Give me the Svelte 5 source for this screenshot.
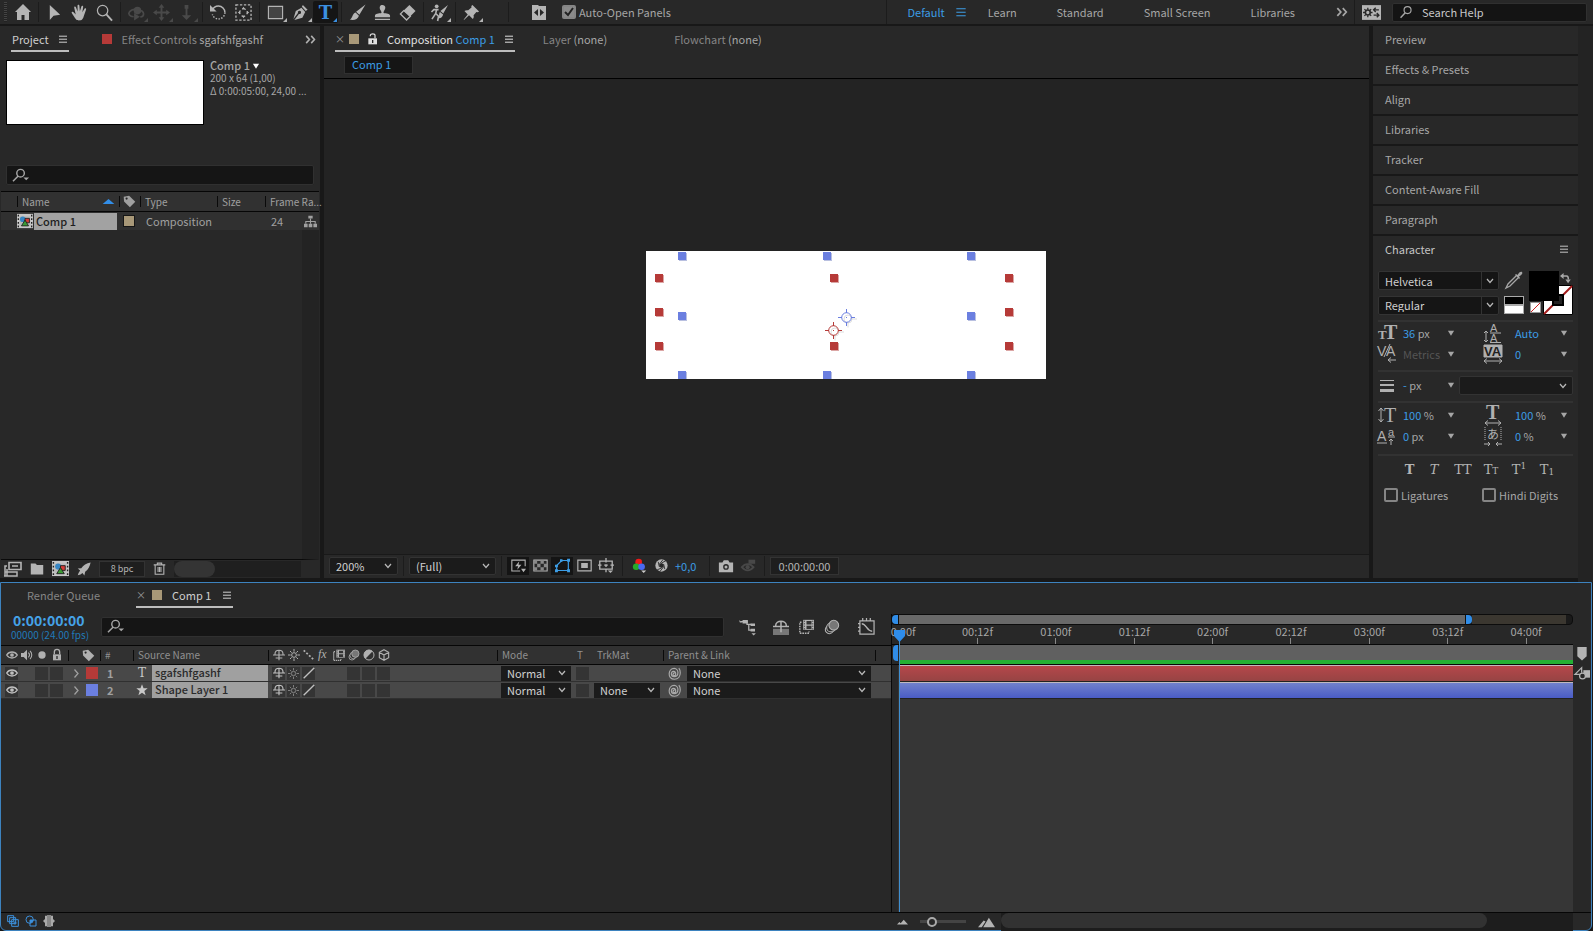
<script lang="ts">
	const icons: Record<string, string> = {
		home: '<path fill="currentColor" d="M9 1 1 9h2v8h4.500v-5h3v5H15V9h2z"/>',
		select: '<path fill="currentColor" d="M4 1v16l4-4.500 7-1z"/>',
		hand: '<path fill="currentColor" d="M5.500 16.500C4 14.500 1.500 11 .8 9.600c-.5-1.300 1-1.900 1.900-.8L5 11 3.400 4c-.3-1.500 1.400-1.800 1.800-.5L7 8 6.900 2c0-1.500 1.900-1.500 2 0l.5 5.800L11 2.600c.4-1.300 2.100-.9 1.900.5L12 8.700l2.300-3.600c.8-1.100 2.200-.2 1.600 1L13.500 13c-.6 2-1.500 4-3 4.200-2 .3-4 .3-5-.7z"/>',
		zoom: '<circle cx="7" cy="7" r="5.500" fill="none" stroke="currentColor" stroke-width="1.300"/><path d="m11 11 6 6.500" stroke="currentColor" stroke-width="2"/>',
		orbit: '<path fill="none" stroke="currentColor" stroke-width="1.800" d="M6 13.500C1.500 13 0 10.500 1.500 8.500S7 5.500 10 6s6.500 2 6.500 4.500c0 1.500-1.500 3-3.500 3.300"/><path fill="currentColor" d="m6.500 9.500 6 4-6 4z"/><circle cx="10" cy="7" r="4" fill="currentColor"/>',
		pan: '<path fill="currentColor" d="m9 0 3 4h-2v4h4V6l4 3-4 3v-2h-4v4h2l-3 4-3-4h2v-4H4v2L0 9l4-3v2h4V4H6z"/>',
		dolly: '<path fill="currentColor" d="M8 3h2v9h4l-5 5-5-5h4zM7 1h4v4H7z"/>',
		rotate: '<path fill="none" stroke="currentColor" stroke-width="1.600" d="M2.500 6.500A6.900 6.900 0 0 1 9 2.200a6.800 6.800 0 0 1 6.800 6.800"/><path fill="none" stroke="currentColor" stroke-width="1.500" stroke-dasharray="1.500 1.500" d="M15.800 9A6.800 6.800 0 0 1 2.500 11"/><path fill="currentColor" d="M0 1v7h7z"/>',
		anchor: '<path fill="none" stroke="currentColor" stroke-width="1.400" stroke-dasharray="2.500 1.700" d="M1 1h16v16H1z"/><circle cx="9" cy="9" r="4" fill="none" stroke="currentColor" stroke-width="1.200" stroke-dasharray="4 2.280" stroke-dashoffset="2"/><path fill="currentColor" d="m9 3 1.800 2.500H7.200zM9 15l1.800-2.500H7.200zM3 9l2.500-1.800v3.600zM15 9l-2.500-1.800v3.600z"/>',
		rect: '<path fill="#444" stroke="currentColor" stroke-width="1.200" d="M1.500 2.500h15v13h-15z"/>',
		pen: '<path fill="currentColor" d="m11.500 1 5 5-2 1.500-4-4.500zM10 4l4 4.500-3 6L2.500 17l4.800-6.500a1.700 1.700 0 1 0-1-1L1.500 16 4 7.500z"/>',
		type: '<text x="9" y="16" text-anchor="middle" font-family="DejaVu Serif" font-weight="bold" font-size="19" fill="currentColor">T</text>',
		brush: '<path fill="currentColor" d="M17.500.5 11 11.500 7.500 8.300zM7 9l3.500 3.400C9.500 16 5 18 .8 16.500 4 15 3.500 10 7 9z"/>',
		stamp: '<path fill="currentColor" d="M8 9.500C8 7 6 6.500 6 4s1.500-3 3-3 3 .8 3 3-2 3-2 5.500c3 .5 7 .5 7 3v1.500H1v-1.500c0-2.500 4-2.500 7-3zM1 15.500h16V17H1z"/>',
		eraser: '<path fill="currentColor" d="m11 1 6.500 6.500-6 6L5 7z"/><path fill="none" stroke="currentColor" stroke-width="1.400" d="m5 7-3.500 3.500L8 17l4-4z"/>',
		roto: '<circle cx="6" cy="2.500" r="2" fill="currentColor"/><path fill="none" stroke="currentColor" stroke-width="1.700" d="M.5 8.500 3 6h5M6 5.500 5 10l-4 6M5 10l3 3-1 5"/><path fill="currentColor" d="m18 1-5 9-3-2.500zM9.500 8.500l3.300 2.700c-.5 3-3 4.500-5 3.800 1.500-1 0-4.500 1.700-6.500z"/>',
		pin: '<path fill="currentColor" d="m10 1 7 7-1.500.8-1.300-.3-3 3.500c.5 1.800 0 3-.8 4l-4-4L1 17l-.2-.5L5 11 1.500 7.500c1-.8 2.500-1.300 4-.8l3.500-3-.2-1.500z"/>',
		snapbox: '<path fill="currentColor" d="M2 2h6l1 1h7v14H2z"/><path fill="#282828" d="M9 2h7v1H9zM8 6v7l-4-3.500zM10 6v7l4-3.500z"/>',
		syncbox: '<path fill="currentColor" d="M0 2h18v14H0z"/><circle cx="5.500" cy="9" r="2.300" fill="none" stroke="#282828" stroke-width="1.500"/><path stroke="#282828" stroke-width="1.200" d="M5.500 4.500v2M5.500 11.500v2M1 9h2M8 9h2M2.300 5.800l1.400 1.400M7.300 10.800l1.400 1.400M8.700 5.800 7.300 7.200M3.700 10.800l-1.400 1.400"/><path fill="none" stroke="#282828" stroke-width="1.300" d="M11 6.500h5M11 11.500h5M13 4.500l-2 2 2 2M14 9.500l2 2-2 2"/>',
		search: '<circle cx="11" cy="6.500" r="4.500" fill="none" stroke="currentColor" stroke-width="1.500"/><path d="m8 10-6 6.500" stroke="currentColor" stroke-width="1.800"/>',
		searchmenu: '<circle cx="8" cy="6.500" r="4" fill="none" stroke="currentColor" stroke-width="1.500"/><path d="M5.500 9.500 0 15" stroke="currentColor" stroke-width="1.600"/><path fill="currentColor" d="M11 11h6l-3 3z"/>',
		menu: '<path stroke="currentColor" stroke-width="1.500" d="M3 4.800h12M3 9.300h12M3 13.800h12"/>',
		more: '<path fill="none" stroke="currentColor" stroke-width="2.200" d="m3 4 4.500 5L3 14M10 4l4.500 5-4.500 5"/>',
		lock: '<path fill="currentColor" d="M3 8h12v9H3z"/><path fill="none" stroke="currentColor" stroke-width="2" d="M5 8V4.500a4 4 0 0 1 8 0V8"/><path fill="#282828" d="M8 10.500h2V15H8z"/>',
		unlock: '<path fill="currentColor" d="M2 8h13v9H2z"/><path fill="none" stroke="currentColor" stroke-width="1.800" d="M5 5V3.500c0-3 7-3 7 0V8"/><path fill="#282828" d="M7.500 10.500h2V15h-2z"/>',
		up: '<path fill="currentColor" d="M2 12 9 6l7 6z"/>',
		down: '<path fill="currentColor" d="M2 4h14l-7 11z"/>',
		tag: '<path fill="currentColor" d="M1 2.500 8.500 1 17 9.500 9.500 17 1.500 9z"/><circle cx="5" cy="5" r="1.500" fill="#282828"/>',
		comp: '<path fill="#c6c6c6" d="M0 1h18v16H0z"/><path stroke="#222" stroke-width="1.500" stroke-dasharray="2 2" d="M1.500 2v14M16.500 2v14"/><path fill="#bbb" d="M3 3.500h12v11H3z"/><circle cx="6.500" cy="7" r="3.200" fill="#3786c4"/><path fill="#d53b36" stroke="#222" d="M9 6h5v5H9z"/><path fill="#3b9a36" stroke="#222" d="m9 8 4 6.500H5z"/>',
		tree: '<path fill="currentColor" d="M6 1h6v4H6zM0 12h5v5H0zM6.500 12h5v5h-5zM13 12h5v5h-5z"/><path fill="none" stroke="currentColor" stroke-width="1.500" d="M9 5v7M2.500 12V9h13v3"/>',
		footage: '<path fill="none" stroke="currentColor" stroke-width="1.600" d="M5 2.500h12v7H5z"/><path fill="none" stroke="currentColor" stroke-width="1.500" d="M3 6H1v10M1 12h12v4H0M3 9v7M8 6h6"/>',
		folder: '<path fill="currentColor" d="M1 2h6l2 2h8v12H1z"/>',
		rocket: '<path fill="currentColor" d="M17.500.5C12 1 8 4 5.500 8L1 8.500l3 2.500-2 3-1 3 3.500-1 2.500-2 2.500 3.500 1-5c4-3 6-7 7-12z"/>',
		trash: '<path fill="none" stroke="currentColor" stroke-width="1.500" d="M1 4h16M6 4V1.500h6V4M3 4v13h12V4M7 7v7M9 7v7M11 7v7"/>',
		preview: '<path fill="none" stroke="currentColor" stroke-width="1.300" d="M17 10V2.500H1v13h10"/><path fill="currentColor" d="m10 4-5 6h3.500l-1 4 5-6H9zM12 13h6l-3 4z"/>',
		checker: '<path fill="none" stroke="currentColor" stroke-width="1.300" d="M1 2.500h16v13H1z"/><path fill="#888" d="M1 3h4v4H1zM9 3h4v4H9zM5 7h4v4H5zM13 7h4v4h-4zM1 11h4v4H1zM9 11h4v4H9z"/>',
		mask: '<path fill="none" stroke="currentColor" stroke-width="1.400" d="M2 15V9l6-6h8v12z"/><path fill="currentColor" d="M0 13.500h3.500V17H0zM14.500 13.500H18V17h-3.500zM14.500 1H18v3.500h-3.500zM6 1.500h3v3H6zM0 8h3.500v3H0z"/>',
		region: '<path fill="none" stroke="currentColor" stroke-width="1.400" d="M1 2.500h16v13H1z"/><path fill="currentColor" d="M5 6h8v6H5z"/>',
		guides: '<path fill="none" stroke="currentColor" stroke-width="1.500" d="M2 3.500h14v9H2zM9 0v5M9 7v3M9 12v4M0 8h4M7 8h4M14 8h4"/><path fill="currentColor" d="M11 14h6l-3 3z"/>',
		rgb: '<circle cx="8" cy="5" r="4" fill="#f21818"/><circle cx="5" cy="10.500" r="4" fill="#28a928"/><circle cx="11.500" cy="10.500" r="4" fill="#4969f2"/><path fill="#ccc" d="M11 15h6l-3 3z"/>',
		shutter: '<circle cx="9" cy="9" r="8.500" fill="currentColor"/><path fill="#282828" d="m9 5.500 3 1.700v3.600l-3 1.700-3-1.700V7.200z"/><path fill="none" stroke="#282828" stroke-width="1.200" d="m9 5.500 6-3M12 7.200 13.500 14M12 10.800 7 17M9 12.500l-6 2.500M6 10.800 4.500 4M6 7.200 11 1"/>',
		camera: '<path fill="currentColor" d="M1 5h4l1.500-2.500h5L13 5h4v11H1z"/><circle cx="9" cy="10" r="3.200" fill="#282828"/><circle cx="9" cy="10" r="1.700" fill="currentColor"/>',
		showcam: '<path fill="none" stroke="currentColor" stroke-width="2.200" d="M1 11c4-5 10-5 14 0-4 5-10 5-14 0z"/><circle cx="8" cy="11" r="2.500" fill="currentColor"/><path fill="currentColor" d="M9 2h8v5H9z"/>',
		flow: '<path fill="currentColor" d="M4 1h6v4H4zM0 1.500 3 3v1H1zM13 5h5v3h-5zM13 11h5v3h-5zM14 16h5l-2.500 2.500z"/><path fill="none" stroke="currentColor" stroke-width="1.400" d="M2 3h7v3h5M11 6v6.500h3"/>',
		shy: '<path fill="none" stroke="currentColor" stroke-width="1.700" d="M3 9V7.500C3 0 15 0 15 7.500V9M0 9h18M9 2v15M4 13.500h10"/>',
		shytop: '<path fill="#777" d="M0 11h18v7H0z"/><path fill="none" stroke="currentColor" stroke-width="1.700" d="M3 9V7.500C3 1 15 1 15 7.500V9M0 8.500h18M9 2v13"/>',
		blend: '<path fill="none" stroke="currentColor" stroke-width="1.800" stroke-dasharray="2 1" d="M3 4H1v13h11v-2"/><path fill="currentColor" d="M5 1h13v12H5z"/><path fill="#333" d="M9 2.500h6v4H9zM9 8h6v4H9z"/><path stroke="#333" stroke-dasharray="1.500 1.500" d="M6.500 2v11M16.500 2v11"/>',
		blur: '<circle cx="6" cy="12" r="4.500" fill="none" stroke="currentColor" stroke-width="1.200"/><circle cx="8" cy="9.500" r="5" fill="#282828" stroke="currentColor" stroke-width="1.200"/><circle cx="11" cy="7" r="5.500" fill="#777" stroke="currentColor" stroke-width="1.200"/>',
		graph: '<path fill="none" stroke="currentColor" stroke-width="1.300" d="M2 3h15v14H2zM5 3V0M9 3V0M13 3V0M2 6H0M2 10H0M2 14H0"/><path fill="none" stroke="currentColor" stroke-width="1.500" d="M4 6c5 0 5 8 11 8"/>',
		eye: '<path fill="none" stroke="currentColor" stroke-width="2" d="M1 9c4-6 12-6 16 0-4 6-12 6-16 0z"/><circle cx="9" cy="9" r="2.800" fill="currentColor"/>',
		speaker: '<path fill="currentColor" d="M0 6h4l5-5v16l-5-5H0z"/><path fill="none" stroke="currentColor" stroke-width="1.600" d="M11 5.500c2 2 2 5 0 7M13.500 3c3.500 3 3.500 9 0 12"/>',
		dot: '<circle cx="9" cy="9" r="5.500" fill="currentColor"/>',
		sun: '<circle cx="9" cy="9" r="3.500" fill="none" stroke="currentColor" stroke-width="1.500"/><path stroke="currentColor" stroke-width="1.500" d="M9 0v4M9 14v4M0 9h4M14 9h4M3 3l2.500 2.500M12.500 12.500 15 15M15 3l-2.500 2.500M5.500 12.500 3 15"/>',
		steps: '<path stroke="currentColor" stroke-width="2.600" stroke-dasharray="3 2.500" d="m1 2 15 14"/>',
		fx: '<text x="0" y="14" font-family="Liberation Serif" font-style="italic" font-size="18" fill="currentColor">fx</text>',
		half: '<circle cx="9" cy="9" r="7.500" fill="none" stroke="currentColor" stroke-width="1.500"/><path fill="currentColor" d="M3.500 14.500A7.600 7.600 0 0 1 14.500 3.500z"/>',
		cube: '<path fill="none" stroke="currentColor" stroke-width="1.700" d="m9 1 7 4v8l-7 4-7-4V5zM2 5l7 4 7-4M9 9v8"/>',
		slash: '<path stroke="currentColor" stroke-width="2" d="M1 17 17 1"/>',
		chevron: '<path fill="none" stroke="currentColor" stroke-width="2.500" d="m5 1 7 8-7 8"/>',
		star: '<path fill="currentColor" d="m9 .5 2.300 6h6.200l-5 4 1.900 6.500L9 13l-5.400 4 1.900-6.500-5-4h6.200z"/>',
		letter: '<text x="9" y="15.500" text-anchor="middle" font-family="DejaVu Serif" font-size="18" fill="currentColor">T</text>',
		whip: '<path fill="none" stroke="currentColor" stroke-width="1.600" d="M9.500 8.500a1.800 1.800 0 1 0 1 2c.6-2.500-.5-4.500-2.800-4.500C3.500 6 3.500 13.500 8.500 13.500c7 0 7-11.500 0-11.500C0 2-1.500 17 9 17c5 0 8-4 8-9 0-3-.8-5-2-6.500"/>',
		marker: '<path fill="currentColor" d="M3 0h12v12l-6 5.500L3 12z"/>',
		markout: '<path fill="currentColor" d="M10 5h8v9h-8z"/><path fill="none" stroke="currentColor" stroke-width="1.500" d="M7 10H0l8-8v6"/><circle cx="9" cy="12" r="3.500" fill="#282828" stroke="currentColor" stroke-width="1.500"/>',
		layers: '<path fill="#282828" stroke="currentColor" stroke-width="1.500" d="M1 1h9v9H1zM4 4h9v9H4zM7 7h10v10H7z"/><path stroke="currentColor" stroke-width="1.500" d="M9.500 12h5M12 9.500v5"/>',
		modes: '<circle cx="7" cy="7" r="5.500" fill="none" stroke="currentColor" stroke-width="1.500"/><path fill="none" stroke="currentColor" stroke-width="1.500" d="M7.500 7.500h9v9h-9z"/><path fill="currentColor" d="M7.500 7.500h5l-1 3-4 2z"/>',
		braces: '<path fill="#888" d="M6 0h6v18H6z"/><path fill="currentColor" d="M3 1h3v16H3V12L0 9l3-3zM15 1h-3v16h3v-5l3-3-3-3z"/>',
		small: '<path fill="currentColor" d="m0 14 4-4 2 2 5-6 7 8z"/>',
		large: '<path fill="currentColor" d="m0 15 6-7 2 1-4 6zM5.500 15l6-10L18 15z"/>',
		dropper: '<path fill="currentColor" d="m10 4 1-1 1.500 1C14 1 16 0 17 1s0 3-3 4.500L15 7l-1 1z"/><path fill="none" stroke="currentColor" stroke-width="1.300" d="M11 5 3 13l-2 4 4-2 8-8"/>',
		swap: '<path fill="none" stroke="currentColor" stroke-width="2.500" d="M4 5h7c3 0 3 2 3 6"/><path fill="currentColor" d="M0 5 6 0v10zM9 11h9l-4.500 6z"/>'
	};

	// character panel glyphs, drawn on a 20 x 20 grid
	const glyphs: Record<string, string> = {
		size: '<text x="0" y="16" font-size="13" font-weight="bold">T</text><text x="6" y="16" font-size="20" font-weight="bold">T</text>',
		kern: '<text class="sans" x="-1" y="12" font-size="14">V</text><text class="sans" x="8" y="12" font-size="14">A</text><path d="M12 0 6 13M18 16h-8m3-2.500L10 16l3 2.500"/>',
		lead: '<text class="sans" x="7" y="9" font-size="11">A</text><text class="sans" x="7" y="19" font-size="11">A</text><path d="M7 10h11M7 19.500h11M3 8v11M1 10l2-2 2 2M1 17l2 2 2-2"/>',
		track: '<path fill="currentColor" stroke="none" d="M1 1h18v12H1z"/><text class="sans dark" x="1" y="12" font-size="13">VA</text><path d="M1 17h18M4 14.500 1 17l3 2.500M16 14.500l3 2.500-3 2.500"/>',
		stroke: '<path stroke-width="1" d="M2 5.500h14"/><path stroke-width="2" d="M2 10h14"/><path stroke-width="3" d="M2 15.500h14"/>',
		vscale: '<path d="M3 3v14M0.500 6 3 3l2.500 3M.5 14 3 17l2.500-3"/><text x="6" y="17" font-size="20">T</text>',
		hscale: '<text x="3" y="14" font-size="20" font-weight="bold">T</text><path d="M2 18h16M5 15.500 2 18l3 2.500M15 15.500l3 2.500-3 2.500"/>',
		base: '<text class="sans" x="-1" y="15" font-size="14">A</text><text class="sans" x="10" y="10" font-size="11">a</text><path d="M-1 17h10M10 11h7M13 19v-6m-2 2 2-2 2 2"/>',
		tsume: '<text class="cjk" x="4" y="13" font-size="12">あ</text><path stroke-dasharray="1 1" d="M2 1v13M18 1v13"/><path d="M1 18h6M5 16l2 2-2 2M19 18h-6M15 16l-2 2 2 2"/>'
	};

	type Tool = { name: string; dim?: boolean; more?: boolean; on?: boolean };
	const tools: Tool[][] = [
		[{ name: 'select' }, { name: 'hand' }, { name: 'zoom' }],
		[
			{ name: 'orbit', dim: true, more: true },
			{ name: 'pan', dim: true, more: true },
			{ name: 'dolly', dim: true, more: true }
		],
		[{ name: 'rotate' }, { name: 'anchor' }],
		[
			{ name: 'rect', more: true },
			{ name: 'pen', more: true },
			{ name: 'type', more: true, on: true }
		],
		[{ name: 'brush' }, { name: 'stamp' }, { name: 'eraser' }],
		[{ name: 'roto', more: true }],
		[{ name: 'pin', more: true }]
	];

	const workspaces = ['Learn', 'Standard', 'Small Screen', 'Libraries'];
	const panels = ['Preview', 'Effects & Presets', 'Align', 'Libraries', 'Tracker', 'Content-Aware Fill', 'Paragraph'];
	const switches = ['shy', 'sun', 'steps', 'fx', 'blend', 'blur', 'half', 'cube'];
	const times = ['0:00f', '00:12f', '01:00f', '01:12f', '02:00f', '02:12f', '03:00f', '03:12f', '04:00f'];

	const layers = [
		{ num: 1, name: 'sgafshfgashf', icon: 'letter', color: '#b63a38', matte: false },
		{ num: 2, name: 'Shape Layer 1', icon: 'star', color: '#6b7fe0', matte: true }
	];

	const blueHandles = [[32, 1], [177, 1], [321, 1], [32, 61], [321, 61], [32, 120], [177, 120], [321, 120]];
	const redHandles = [[9, 23], [184, 23], [359, 23], [9, 57], [359, 57], [9, 91], [184, 91], [359, 91]];
	const anchors = [
		{ x: 200, y: 66, color: '#6b7fe0' },
		{ x: 187, y: 79, color: '#b63a38' }
	];

	let autoOpen = $state(true);
	let ligatures = $state(false);
	let hindi = $state(false);
	let zoomLevel = $state(20);
</script>

{#snippet icon(name: string, size = 18)}
	<svg class="icon" width={size} height={size} viewBox="0 0 18 18" aria-hidden="true">{@html icons[name]}</svg>
{/snippet}

{#snippet glyph(name: string)}
	<svg class="glyph" width="20" height="20" viewBox="0 0 20 20" aria-hidden="true">{@html glyphs[name]}</svg>
{/snippet}

{#snippet metric(name: string, value: string, unit: string, dim = false)}
	<div class="metric">
		{@render glyph(name)}
		<span class="value"><b class:dim>{value}</b> {unit}</span>
		<button class="plain" aria-label="{name} presets">{@render icon('down', 8)}</button>
	</div>
{/snippet}

<div class="app">
	<header class="toolbar">
		<span class="grip"></span>
		<button class="tool home" aria-label="Home">{@render icon('home')}</button>
		{#each tools as group}
			<span class="sep"></span>
			{#each group as tool}
				<button class="tool" class:dim={tool.dim} class:more={tool.more} class:on={tool.on} aria-label={tool.name}>
					{@render icon(tool.name, 17)}
				</button>
			{/each}
		{/each}
		<span class="sep wide"></span>
		<button class="tool snap" aria-label="Toggle panels">{@render icon('snapbox', 18)}</button>
		<label class="check filled"><input type="checkbox" bind:checked={autoOpen} />Auto-Open Panels</label>
		<nav class="workspaces">
			<a class="current" href="#default">Default {@render icon('menu', 14)}</a>
			{#each workspaces as name}
				<a href="#{name}">{name}</a>
			{/each}
			<button class="plain" aria-label="More workspaces">{@render icon('more', 14)}</button>
		</nav>
		<button class="tool sync" aria-label="Sync settings">{@render icon('syncbox', 19)}</button>
		<label class="help">{@render icon('search', 14)}<input type="text" placeholder="Search Help" aria-label="Search Help" /></label>
	</header>

	<main class="upper">
		<section class="panel project">
			<div class="tabs">
				<button class="tab active">Project {@render icon('menu', 12)}</button>
				<button class="tab effects"><i class="swatch red"></i><span>Effect Controls <em>sgafshfgashf</em></span></button>
				<button class="plain overflow" aria-label="More tabs">{@render icon('more', 13)}</button>
			</div>
			<div class="info">
				<div class="thumb"></div>
				<div class="meta">
					<strong>Comp 1{@render icon('down', 8)}</strong>
					<span>200 x 64 (1,00)</span>
					<span>Δ 0:00:05:00, 24,00 ...</span>
				</div>
			</div>
			<label class="field">{@render icon('searchmenu', 17)}<input type="text" aria-label="Search project" /></label>
			<table class="items">
				<thead>
					<tr>
						<th></th>
						<th>Name <span class="sort">{@render icon('up', 15)}</span></th>
						<th class="center">{@render icon('tag', 13)}</th>
						<th>Type</th>
						<th>Size</th>
						<th>Frame Ra...</th>
					</tr>
				</thead>
				<tbody>
					<tr>
						<td></td>
						<td class="name">{@render icon('comp', 16)}<b>Comp 1</b></td>
						<td class="center"><i class="swatch tan boxed"></i></td>
						<td>Composition</td>
						<td></td>
						<td class="rate">24 {@render icon('tree', 13)}</td>
					</tr>
				</tbody>
			</table>
			<div class="list"></div>
			<footer class="foot">
				<button class="plain" aria-label="Interpret footage">{@render icon('footage', 18)}</button>
				<button class="plain" aria-label="New folder">{@render icon('folder', 14)}</button>
				<button class="plain" aria-label="New composition">{@render icon('comp', 17)}</button>
				<button class="plain" aria-label="Project settings">{@render icon('rocket', 14)}</button>
				<button class="depth">8 bpc</button>
				<button class="plain" aria-label="Delete">{@render icon('trash', 13)}</button>
				<div class="scroll"><span></span></div>
			</footer>
		</section>

		<section class="panel composition">
			<div class="tabs">
				<button class="tab active comp-tab">
					<small>×</small><i class="swatch tan"></i>{@render icon('unlock', 12)}
					<span>Composition <mark>Comp 1</mark></span>{@render icon('menu', 12)}
				</button>
				<button class="tab"><span>Layer <em>(none)</em></span></button>
				<button class="tab flowchart"><span>Flowchart <em>(none)</em></span></button>
			</div>
			<div class="crumbs"><button>Comp 1</button></div>
			<div class="viewer">
				<svg width="400" height="128" viewBox="0 0 400 128" role="img" aria-label="Composition preview">
					<rect width="400" height="128" fill="#fff" />
					{#each blueHandles as [x, y]}
						<rect x={x + 1} y={y + 1} width="8" height="8" fill="#b9c0e0" />
						<rect {x} {y} width="8" height="8" fill="#6b7fe0" />
					{/each}
					{#each redHandles as [x, y]}
						<rect x={x + 1} y={y + 1} width="8" height="8" fill="#dba6a5" />
						<rect {x} {y} width="8" height="8" fill="#b63a38" />
					{/each}
					{#each anchors as a}
						<g fill="none" transform="translate({a.x} {a.y})">
							<path stroke="#ddd" d="M2 5.500v5M6 2h5" />
							<circle cx="2" cy="2" r="4" stroke="#ddd" />
							<circle cx=".5" cy=".5" r="4.800" stroke={a.color} />
							<path stroke={a.color} d="M.5-8v4M.5 5v4M-8 .5h4M5 .5h4" />
							<rect width="1" height="1" fill={a.color} />
						</g>
					{/each}
				</svg>
			</div>
			<footer class="viewbar">
				<select class="zoomsel" aria-label="Magnification"><option>200%</option></select>
				<span class="sep"></span>
				<select class="ressel" aria-label="Resolution"><option>(Full)</option></select>
				<span class="sep"></span>
				<button class="on" aria-label="Fast previews">{@render icon('preview', 15)}</button>
				<button aria-label="Transparency grid">{@render icon('checker', 15)}</button>
				<button class="on blue" aria-label="Mask visibility">{@render icon('mask', 15)}</button>
				<button aria-label="Region of interest">{@render icon('region', 15)}</button>
				<button aria-label="Guides">{@render icon('guides', 16)}</button>
				<span class="sep"></span>
				<button aria-label="Channels">{@render icon('rgb', 15)}</button>
				<button aria-label="Reset exposure">{@render icon('shutter', 13)}</button>
				<span class="exposure">+0,0</span>
				<span class="sep"></span>
				<button aria-label="Take snapshot">{@render icon('camera', 16)}</button>
				<button class="dim" aria-label="Show snapshot">{@render icon('showcam', 15)}</button>
				<span class="sep"></span>
				<button class="stamp">0:00:00:00</button>
			</footer>
		</section>

		<aside class="side">
			{#each panels as name}
				<button class="fold">{name}</button>
			{/each}
			<section class="character">
				<h2>Character {@render icon('menu', 12)}</h2>
				<div class="fonts">
					<div class="selects">
						<select class="split" aria-label="Font"><option>Helvetica</option></select>
						<select class="split" aria-label="Font style"><option>Regular</option></select>
					</div>
					<div class="pickers">
						<button class="plain" aria-label="Eyedropper">{@render icon('dropper', 18)}</button>
						<button class="bw" aria-label="Black and white"></button>
					</div>
					<svg class="colors" width="44" height="44" viewBox="0 0 44 44" role="img" aria-label="Fill and stroke colors">
						<path fill="#fff" stroke="#000" d="M14.500 14.500h29v29h-29z" />
						<path stroke="#a31c1c" stroke-width="2" d="m15 43 28-28" />
						<path fill="#222" stroke="#000" stroke-width="2" d="M24 24h10v10H24z" />
						<path d="M0 0h30v30H0z" />
						<path fill="#fff" stroke="#999" d="M1.500 31.500h10v10h-10z" />
						<path stroke="#c22" d="m2 41 9-9" />
						<g color="#a8a8a8" transform="translate(31 2) scale(.6)">{@html icons.swap}</g>
					</svg>
				</div>
				<div class="metrics">
					{@render metric('size', '36', 'px')}
					{@render metric('lead', 'Auto', '')}
					{@render metric('kern', 'Metrics', '', true)}
					{@render metric('track', '0', '')}
				</div>
				<div class="metrics strokes">
					{@render metric('stroke', '-', 'px')}
					<select aria-label="Stroke order"><option></option></select>
				</div>
				<div class="metrics scales">
					{@render metric('vscale', '100', '%')}
					{@render metric('hscale', '100', '%')}
					{@render metric('base', '0', 'px')}
					{@render metric('tsume', '0', '%')}
				</div>
				<div class="faux">
					<button><b>T</b></button>
					<button><i>T</i></button>
					<button>TT</button>
					<button>T<small>T</small></button>
					<button>T<sup>1</sup></button>
					<button>T<sub>1</sub></button>
				</div>
				<div class="options">
					<label class="check"><input type="checkbox" bind:checked={ligatures} />Ligatures</label>
					<label class="check"><input type="checkbox" bind:checked={hindi} />Hindi Digits</label>
				</div>
			</section>
		</aside>
	</main>

	<section class="timeline">
		<div class="stack">
			<div class="tabs">
				<button class="tab queue">Render Queue</button>
				<button class="tab active comp-tab"><small>×</small><i class="swatch tan"></i><span>Comp 1</span>{@render icon('menu', 12)}</button>
			</div>
			<div class="controls">
				<div class="clock"><strong>0:00:00:00</strong><span>00000 (24.00 fps)</span></div>
				<label class="field">{@render icon('searchmenu', 17)}<input type="text" aria-label="Search layers" /></label>
				<div class="toggles">
					<button class="plain first" aria-label="Mini-flowchart">{@render icon('flow', 16)}</button>
					<button class="plain" aria-label="Hide shy layers">{@render icon('shytop', 16)}</button>
					<button class="plain" aria-label="Frame blending">{@render icon('blend', 15)}</button>
					<button class="plain" aria-label="Motion blur">{@render icon('blur', 16)}</button>
					<button class="plain last" aria-label="Graph editor">{@render icon('graph', 17)}</button>
				</div>
			</div>
			<table class="layers">
				<thead>
					<tr>
						<th class="cells">
							{#each ['eye', 'speaker', 'dot', 'lock'] as name}<span class="cell">{@render icon(name, 12)}</span>{/each}
						</th>
						<th class="tagcell">{@render icon('tag', 13)}</th>
						<th class="hash">#</th>
						<th>Source Name</th>
						<th class="cells">
							{#each switches as name}<span class="cell">{@render icon(name, 12)}</span>{/each}
						</th>
						<th>Mode</th>
						<th class="bare">T</th>
						<th class="bare">TrkMat</th>
						<th>Parent &amp; Link</th>
						<th></th>
					</tr>
				</thead>
				<tbody>
					{#each layers as layer}
						<tr>
							<td class="cells">
								<span class="cell box">{@render icon('eye', 12)}</span>
								<span class="cell"></span>
								<span class="cell box"></span>
								<span class="cell box"></span>
							</td>
							<td class="label">{@render icon('chevron', 9)}<i class="swatch" style:background={layer.color}></i></td>
							<td class="num">{layer.num}</td>
							<td class="source"><span class="kind">{@render icon(layer.icon, 12)}</span><b>{layer.name}</b></td>
							<td class="cells">
								<span class="cell box">{@render icon('shy', 12)}</span>
								<span class="cell box faint">{@render icon('sun', 11)}</span>
								<span class="cell box">{@render icon('slash', 12)}</span>
								<span class="cell"></span>
								<span class="cell"></span>
								<span class="cell box"></span>
								<span class="cell box"></span>
								<span class="cell box"></span>
							</td>
							<td class="pick"><select aria-label="Mode"><option>Normal</option></select></td>
							<td class="cells"><span class="cell box"></span></td>
							<td class="pick matte">{#if layer.matte}<select aria-label="Track matte"><option>None</option></select>{/if}</td>
							<td class="pick parent">{@render icon('whip', 13)}<select aria-label="Parent"><option>None</option></select></td>
							<td></td>
						</tr>
					{/each}
				</tbody>
			</table>
		</div>

		<div class="tracks">
			<div class="navigator"><i class="start"></i><span></span><i class="end"></i><u></u></div>
			<div class="ruler">
				{#each times as time}
					<span>{time}</span>
				{/each}
			</div>
			<div class="workarea"><i></i><span></span></div>
			<div class="bars">
				<div class="bar reds"></div>
				<div class="bar blues"></div>
			</div>
			<div class="playhead"><svg width="11" height="12" viewBox="0 0 11 12"><path fill="#2f8deb" d="M0 0h11v6l-5.500 6L0 6z" /></svg></div>
		</div>
		<div class="strip">
			{@render icon('marker', 14)}
			{@render icon('markout', 15)}
		</div>

		<footer class="status">
			<div class="views">
				<button class="plain" aria-label="Layer switches">{@render icon('layers', 12)}</button>
				<button class="plain" aria-label="Transfer controls">{@render icon('modes', 12)}</button>
				<button class="plain grey" aria-label="In and out">{@render icon('braces', 12)}</button>
			</div>
			<div class="zoomer">
				{@render icon('small', 11)}
				<input type="range" min="0" max="100" bind:value={zoomLevel} aria-label="Timeline zoom" />
				{@render icon('large', 17)}
			</div>
			<div class="hscroll"><span></span></div>
		</footer>
	</section>
</div>

<style>
	:global(body) {
		background: #181818;
	}

	.app {
		--blue: #3c9de5;
		--edge: #181818;
		--panel: #282828;
		--arrow: url("data:image/svg+xml,%3Csvg xmlns='http://www.w3.org/2000/svg' width='8' height='6'%3E%3Cpath d='M1 1l3 3.500 3-3.500' fill='none' stroke='%23b8b8b8' stroke-width='1.200'/%3E%3C/svg%3E");
		display: grid;
		grid-template-rows: 26px minmax(0, 556fr) minmax(0, 349fr);
		height: 100vh;
		overflow: hidden;
		background: var(--edge);
		color: #a6a6a6;
		font: 11px/14px 'Noto Sans CJK SC', 'Noto Sans', sans-serif;
	}

	.app :global(*) {
		box-sizing: border-box;
	}

	button,
	input,
	select {
		margin: 0;
		padding: 0;
		border: 0;
		background: none;
		color: inherit;
		font: inherit;
	}

	button {
		display: flex;
		align-items: center;
		justify-content: center;
	}

	input[type='text'] {
		flex: 1;
		min-width: 0;
		outline: 0;
	}

	input::placeholder {
		color: #c8c8c8;
		opacity: 1;
	}

	select {
		height: 18px;
		padding: 0 6px;
		border: 1px solid #333;
		border-radius: 2px;
		background: #1b1b1b var(--arrow) no-repeat right 5px center;
		color: #d0d0d0;
		line-height: 14px;
		appearance: none;
	}

	em,
	mark {
		background: none;
		font-style: normal;
	}

	em {
		color: #a6a6a6;
	}

	mark {
		color: var(--blue);
	}

	.icon,
	.glyph {
		display: block;
		flex: none;
		overflow: visible;
	}

	.sep {
		flex: none;
		width: 1px;
		height: 20px;
		margin: 0 3px;
		background: #1c1c1c;
	}

	.swatch {
		display: block;
		flex: none;
		width: 10px;
		height: 10px;
	}

	.red {
		background: #b63a38;
	}

	.tan {
		background: #a89878;
	}

	/* toolbar */
	.toolbar {
		display: flex;
		align-items: center;
		padding-bottom: 2px;
		background: linear-gradient(var(--panel) 24px, var(--edge) 24px);
	}

	.grip {
		width: 3px;
		height: 20px;
		margin: 0 3px 0 4px;
		background: repeating-linear-gradient(#444 0 1px, #222 1px 2px);
	}

	.tool {
		position: relative;
		width: 25px;
		height: 22px;
		color: #b4b4b4;
	}

	.tool.more::after {
		content: '';
		position: absolute;
		right: 1px;
		bottom: 1px;
		border: 2px solid transparent;
		border-color: transparent currentColor currentColor transparent;
	}

	.tool.dim {
		color: #494949;
	}

	.tool.on {
		border-radius: 2px;
		background: #151515;
		color: #3b8fe0;
	}

	.tool.snap {
		margin-left: 14px;
	}

	.sep.wide {
		margin-left: 24px;
	}

	.check {
		display: flex;
		align-items: center;
		gap: 3px;
	}

	.check input {
		width: 14px;
		height: 14px;
		border: 2px solid #858585;
		border-radius: 2px;
		appearance: none;
	}

	.check input:checked {
		background: #8b8b8b url("data:image/svg+xml,%3Csvg xmlns='http://www.w3.org/2000/svg' width='10' height='10'%3E%3Cpath d='M1 5l3 3 5-7' fill='none' stroke='%23222' stroke-width='2'/%3E%3C/svg%3E") center no-repeat;
	}

	.filled {
		margin-left: 11px;
	}

	.workspaces {
		display: flex;
		align-items: center;
		gap: 40px;
		height: 24px;
		margin-left: auto;
		padding: 0 5px 0 21px;
		border: solid #1c1c1c;
		border-width: 0 1px;
	}

	.workspaces a {
		display: flex;
		align-items: center;
		gap: 9px;
		color: inherit;
		text-decoration: none;
	}

	.workspaces .current {
		margin-right: -20px;
		color: var(--blue);
	}

	.sync {
		margin: 0 8px 0 4px;
	}

	.help {
		display: flex;
		align-items: center;
		gap: 9px;
		width: 195px;
		height: 19px;
		margin-right: 6px;
		padding: 0 6px;
		border: 1px solid #303030;
		border-radius: 2px;
		background: #141414;
	}

	/* upper panels */
	.upper {
		display: grid;
		grid-template-columns: 320px minmax(0, 1fr) 205px;
		column-gap: 4px;
		min-height: 0;
		padding: 0 15px 4px 0;
		background: linear-gradient(to left, #232323 15px, var(--edge) 15px);
	}

	.panel {
		display: flex;
		flex-direction: column;
		min-width: 0;
		min-height: 0;
		background: var(--panel);
	}

	.tabs {
		display: flex;
		flex: none;
		height: 26px;
		color: #858585;
	}

	.tab {
		gap: 8px;
		padding-bottom: 1px;
		white-space: nowrap;
	}

	.tab.active {
		padding: 2px 0 1px;
		border-bottom: 2px solid #bdbdbd;
		color: #cfcfcf;
	}

	.tab small {
		width: 6px;
		color: #999;
		font-size: 10px;
	}

	.project .tab.active {
		margin-left: 11px;
		padding: 2px 0 1px 1px;
	}

	.effects {
		gap: 10px;
		margin-left: 33px;
	}

	.overflow {
		margin: 0 3px 0 auto;
		color: #b0b0b0;
	}

	.info {
		display: flex;
		gap: 6px;
		height: 113px;
		padding: 8px 6px;
	}

	.thumb {
		flex: none;
		width: 198px;
		height: 65px;
		border: 1px solid #000;
		background: #fff;
	}

	.meta {
		display: flex;
		flex-direction: column;
		white-space: nowrap;
		font-size: 10px;
		line-height: 13px;
	}

	.meta strong {
		display: flex;
		align-items: center;
		gap: 2px;
		height: 11px;
		font-size: 11px;
		font-weight: 500;
	}

	.meta :global(svg) {
		color: #fff;
	}

	.field {
		display: flex;
		align-items: center;
		height: 20px;
		padding: 0 6px;
		border: 1px solid #303030;
		border-radius: 2px;
		background: #151515;
	}

	.project .field {
		flex: none;
		margin: 0 6px 6px;
	}

	table {
		display: block;
		text-align: left;
		color: #a0a0a0;
	}

	thead,
	tbody {
		display: block;
	}

	tr {
		display: grid;
	}

	th,
	td {
		display: flex;
		align-items: center;
		min-width: 0;
		padding: 0;
		font-weight: normal;
		white-space: nowrap;
	}

	thead tr {
		border: solid #060606;
		border-width: 1px 0;
		background: #313131;
		font-size: 10px;
	}

	.items tr {
		grid-template-columns: 16px 102px 21px 77px 48px minmax(0, 1fr);
		margin: 0 1px;
	}

	.items thead tr {
		height: 21px;
	}

	.items tbody tr {
		height: 18px;
		background: #303030;
	}

	th {
		padding-left: 5px;
		background: linear-gradient(#0a0a0a, #0a0a0a) left center / 1px 11px no-repeat;
	}

	th:first-child,
	th.bare {
		background: none;
	}

	.sort {
		margin-left: auto;
		padding-right: 3px;
		color: #328ee8;
	}

	.center {
		justify-content: center;
		padding: 0;
	}

	.items td:nth-child(4) {
		padding-left: 6px;
	}

	.name {
		padding-right: 2px;
	}

	td.center {
		padding-right: 2px;
	}

	.name b {
		flex: 1;
		margin-left: 1px;
		padding: 0 2px;
		background: #a2a2a2;
		color: #1e1e1e;
		font-weight: 500;
		line-height: 17px;
	}

	.boxed {
		outline: 1px solid #161616;
	}

	.items .rate {
		justify-content: space-between;
		padding: 0 2px 0 6px;
	}

	.list {
		flex: 1;
		margin: 0 1px;
		border-right: 17px solid #232323;
		border-bottom: 1px solid #0a0a0a;
	}

	.foot {
		display: flex;
		align-items: center;
		gap: 8px;
		height: 18px;
		padding: 0 19px 1px 4px;
		color: #b4b4b4;
	}

	.depth {
		width: 46px;
		height: 16px;
		border: 1px solid #333;
		background: #1e1e1e;
		font-size: 9px;
	}

	.scroll {
		flex: 1;
		background: #1f1f1f;
	}

	.scroll span {
		display: block;
		width: 41px;
		height: 16px;
		border-radius: 8px;
		background: #343434;
	}

	/* composition viewer */
	.comp-tab {
		gap: 8px;
	}

	.timeline .comp-tab {
		gap: 10px;
	}

	.composition .comp-tab {
		margin: 0 28px 0 11px;
		color: #e0e0e0;
	}

	.flowchart {
		margin-left: 67px;
	}

	.crumbs {
		height: 27px;
		padding: 4px 20px 0;
		border-bottom: 1px solid #000;
	}

	.crumbs button {
		justify-content: flex-start;
		width: 69px;
		height: 18px;
		padding: 0 0 2px 7px;
		border: 1px solid #303030;
		background: #151515;
		color: var(--blue);
	}

	.viewer {
		display: grid;
		flex: 1;
		place-items: center;
		min-height: 0;
		padding: 0 1px 4px 0;
		background: #232323;
	}

	.viewbar {
		display: flex;
		align-items: center;
		height: 24px;
		padding: 0 0 2px 5px;
		border-top: 1px solid #191919;
		color: #b4b4b4;
	}

	.viewbar .sep {
		margin: 0 5px;
	}

	.viewbar button {
		width: 22px;
		height: 18px;
	}

	.viewbar .on {
		background: #141414;
	}

	.viewbar .blue {
		color: var(--blue);
	}

	.viewbar .dim {
		color: #484848;
	}

	.zoomsel {
		width: 69px;
	}

	.ressel {
		width: 87px;
	}

	.exposure {
		width: 32px;
		padding-left: 3px;
		color: var(--blue);
	}

	.viewbar .stamp {
		width: 69px;
		border: 1px solid #333;
		background: #1e1e1e;
	}

	/* side panels */
	.side {
		display: flex;
		flex-direction: column;
		min-height: 0;
	}

	.fold {
		flex: none;
		justify-content: flex-start;
		height: 28px;
		margin-bottom: 2px;
		padding: 0 0 2px 12px;
		background: var(--panel);
	}

	.character {
		flex: 1;
		min-height: 0;
		padding: 0 5px;
		background: var(--panel);
	}

	h2 {
		display: flex;
		align-items: center;
		justify-content: space-between;
		height: 26px;
		margin: 0 3px 9px 7px;
		color: #c4c4c4;
		font-size: 11px;
		font-weight: normal;
	}

	.fonts {
		display: flex;
		gap: 5px;
		padding-bottom: 5px;
	}

	.selects {
		display: grid;
		flex: 1;
		gap: 5px;
	}

	.selects select {
		height: 19px;
	}

	.split {
		background: linear-gradient(#333, #333) right 16px top / 1px 100% no-repeat, #151515 var(--arrow) no-repeat right 4px center;
	}

	.pickers {
		display: flex;
		flex-direction: column;
		gap: 7px;
	}

	.bw {
		width: 20px;
		height: 18px;
		border: 1px solid #aaa;
		background: linear-gradient(#000 7px, #aaa 7px 9px, #fff 9px);
	}

	.metrics {
		display: grid;
		grid-template-columns: 105px minmax(0, 1fr);
		padding-bottom: 6px;
		border-top: 2px solid #323232;
	}

	.metric {
		display: grid;
		grid-template-columns: 25px minmax(0, 1fr) 12px;
		align-items: center;
		height: 21px;
		padding-right: 26px;
	}

	.metric:nth-child(even) {
		grid-template-columns: 32px minmax(0, 1fr) 12px;
		padding-right: 3px;
	}

	.value b {
		color: var(--blue);
		font-weight: normal;
	}

	.value b.dim {
		color: #555;
	}

	.metrics.strokes {
		grid-template-columns: 81px minmax(0, 1fr);
		padding: 2px 0 6px;
	}

	.strokes .metric {
		padding-right: 2px;
	}

	.strokes select {
		height: 19px;
		margin-top: 2px;
	}

	.metrics.scales {
		padding: 1px 0 8px;
	}

	.glyph {
		color: #b0b0b0;
	}

	.glyph :global(text) {
		fill: currentColor;
		font-family: 'Liberation Serif', serif;
	}

	.glyph :global(.sans) {
		font-family: 'Liberation Sans', sans-serif;
	}

	.glyph :global(.dark) {
		fill: #222;
		font-weight: bold;
	}

	.glyph :global(.cjk) {
		font-family: 'Noto Sans CJK JP', sans-serif;
	}

	.glyph :global(path) {
		fill: none;
		stroke: currentColor;
	}

	.glyph :global(path[fill]) {
		fill: currentColor;
	}

	.faux {
		display: grid;
		grid-template-columns: 25px 24px 34px 22px 34px 22px;
		height: 29px;
		padding-left: 19px;
		border-top: 2px solid #323232;
		color: #b4b4b4;
		font-family: 'DejaVu Serif', serif;
		font-size: 13px;
	}

	.faux small,
	.faux sup,
	.faux sub {
		font-size: 9px;
		line-height: 9px;
	}

	.faux small {
		padding-top: 3px;
	}

	.faux sup {
		padding-bottom: 6px;
	}

	.faux sub {
		padding-top: 6px;
	}

	.options {
		display: grid;
		grid-template-columns: 98px 1fr;
		padding: 5px 0 0 6px;
	}

	/* timeline */
	.timeline {
		display: grid;
		grid-template-rows: minmax(0, 1fr) 18px;
		grid-template-columns: 890px minmax(0, 1fr) 18px;
		margin-right: 1px;
		border: 1px solid #3d83bf;
		border-radius: 0 0 6px 6px;
		background: var(--panel);
	}

	.timeline .tabs {
		height: 25px;
	}

	.queue {
		margin: 0 36px 0 26px;
	}

	.controls {
		display: flex;
		align-items: center;
		height: 37px;
	}

	.clock {
		display: flex;
		flex-direction: column;
		width: 100px;
		padding: 1px 0 0 10px;
		color: #217ab8;
		font-size: 10px;
	}

	.clock strong {
		padding-left: 2px;
		color: #45a3e8;
		font-size: 14px;
		line-height: 16px;
	}

	.controls .field {
		flex: 1;
	}

	.toggles {
		display: flex;
		align-items: center;
		gap: 10px;
		width: 167px;
		padding-left: 15px;
		color: #b4b4b4;
	}

	.toggles .first {
		margin-right: 8px;
	}

	.toggles .last {
		margin-left: 8px;
	}

	.layers tr {
		grid-template-columns: 67px 32px 33px 135px 229px 75px 20px 71px 212px minmax(0, 1fr);
	}

	.layers thead tr {
		height: 20px;
	}

	.layers thead {
		color: #909090;
	}

	.layers thead :global(svg) {
		color: #b0b0b0;
	}

	.layers tbody tr {
		height: 17px;
		border-bottom: 1px solid #303030;
		background: #484848;
	}

	.cells,
	.layers th.cells {
		padding-left: 3px;
	}

	.cell {
		display: flex;
		align-items: center;
		justify-content: center;
		width: 13px;
		height: 13px;
		margin: 0 1px;
		color: #c0c0c0;
	}

	.box {
		background: #343434;
	}

	.faint {
		color: #888;
	}

	.layers .tagcell {
		padding-left: 14px;
	}

	.layers .bare {
		padding-left: 5px;
	}

	.label {
		gap: 5px;
		padding-left: 4px;
	}

	.label .swatch {
		width: 12px;
		height: 12px;
	}

	.num {
		padding-left: 7px;
		font-weight: bold;
	}

	.kind {
		width: 19px;
		padding-left: 3px;
		color: #c8c8c8;
	}

	.source b {
		flex: 1;
		height: 16px;
		padding-left: 3px;
		background: #a0a0a0;
		color: #2b2b2b;
		font-weight: 500;
		line-height: 15px;
	}

	.pick {
		gap: 6px;
		padding: 0 1px 0 4px;
	}

	.matte {
		padding: 0 3px 0 2px;
	}

	.pick select {
		flex: 1;
		height: 15px;
		border: 0;
		border-radius: 0;
	}

	.parent {
		padding: 0 4px 0 5px;
		color: #aaa;
	}

	.tracks {
		position: relative;
		display: flex;
		flex-direction: column;
		min-width: 0;
		padding-top: 31px;
		background: linear-gradient(#080808, #080808) left bottom / 1px calc(100% - 31px) no-repeat, linear-gradient(#282828 82px, transparent 82px), linear-gradient(to right, #282828 7px, #363636 7px);
	}

	.navigator {
		display: flex;
		flex: none;
		height: 11px;
		border: 1px solid #0c0c0c;
		border-radius: 4px;
		background: #1a1a1a;
	}

	.navigator i {
		width: 6px;
		background: #308de8;
	}

	.navigator .start,
	.workarea i {
		border-radius: 4px 0 0 4px;
	}

	.navigator .end {
		border-radius: 0 4px 4px 0;
	}

	.navigator span {
		flex: 0 0 83.6%;
		border: solid #111;
		border-width: 0 1px;
		background: #696969;
	}

	.navigator u {
		flex: 1;
		margin-right: 6px;
		background: #3b3730;
	}

	.ruler {
		display: flex;
		flex: none;
		height: 19px;
		margin-left: 8px;
		font-size: 11px;
		line-height: 13px;
	}

	.ruler span {
		flex: 0 0 11.63%;
		text-align: center;
		background: linear-gradient(#888, #888) center bottom / 1px 6px no-repeat;
	}

	.ruler span:first-child {
		margin-left: -5.8%;
		padding-left: 8px;
		background: none;
	}

	.workarea {
		display: flex;
		flex: none;
		height: 21px;
		border: solid #080808;
		border-width: 1px 0;
	}

	.workarea i {
		width: 5px;
		height: 16px;
		margin: 0 1px 0 2px;
		background: #308de8;
	}

	.workarea span {
		flex: 1;
		border-bottom: 4px solid #23b033;
		background: #606060;
	}

	.bars {
		margin-left: 8px;
	}

	.bar {
		height: 17px;
		border-top: 1px solid #c0b8c0;
		border-bottom: 1px solid #222;
	}

	.reds {
		background: linear-gradient(#b5474a, #974444);
	}

	.blues {
		background: linear-gradient(#7080cc, #4a5cc6);
	}

	.playhead {
		position: absolute;
		top: 47px;
		bottom: 0;
		left: 3px;
		width: 11px;
		background: linear-gradient(#3f8fd0, #3f8fd0) center / 1px 100% no-repeat;
	}

	.playhead svg {
		display: block;
	}

	.strip {
		display: flex;
		flex-direction: column;
		gap: 5px;
		align-items: center;
		padding-top: 64px;
		color: #b4b4b4;
	}

	.status {
		display: grid;
		grid-column: 1 / -1;
		grid-template-columns: 890px 110px minmax(0, 1fr);
		border-top: 1px solid #060606;
	}

	.views,
	.zoomer {
		display: flex;
		align-items: center;
		padding-bottom: 2px;
	}

	.views {
		gap: 6px;
		padding-left: 6px;
		color: #3c90dc;
	}

	.views .grey {
		color: #aaa;
	}

	.zoomer {
		justify-content: space-between;
		padding: 0 6px 1px;
		color: #b4b4b4;
	}

	input[type='range'] {
		width: 46px;
		height: 12px;
		background: linear-gradient(#444, #444) center / 100% 3px no-repeat;
		appearance: none;
	}

	input[type='range']::-webkit-slider-thumb {
		width: 10px;
		height: 10px;
		border: 2px solid #aaa;
		border-radius: 50%;
		background: #282828;
		appearance: none;
	}

	.hscroll {
		margin-right: 18px;
		background: #1d1d1d;
	}

	.hscroll span {
		display: block;
		width: 85%;
		height: 15px;
		border-radius: 8px;
		background: #323232;
	}
</style>
